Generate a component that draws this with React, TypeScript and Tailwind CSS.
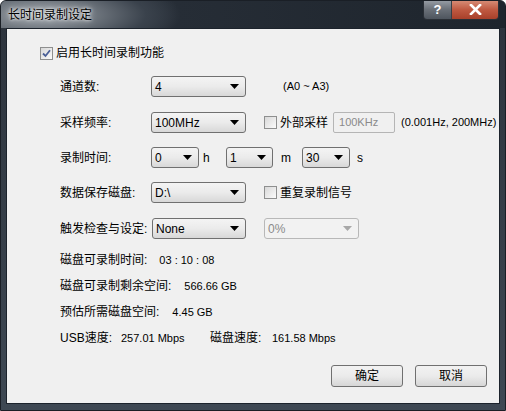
import React from "react";

const font = { fontFamily: '"Liberation Sans", "Noto Sans CJK SC", sans-serif' };

function Arrow({ disabled = false }: { disabled?: boolean }) {
  return (
    <svg width="9" height="5" viewBox="0 0 9 5" className="shrink-0">
      <path d="M0 0 H9 L4.5 5 Z" fill={disabled ? "#a8a8a8" : "#000"} />
    </svg>
  );
}

function Select({ value, width, disabled = false }: { value: string; width: string; disabled?: boolean }) {
  return (
    <div
      className={`${width} flex h-[21px] items-center justify-between rounded-[3px] border pl-[3px] pr-[6px] text-[12px] ${
        disabled
          ? "border-[#b8b8b8] bg-[#f2f2f2] text-[#8a8a8a]"
          : "border-[#707070] bg-gradient-to-b from-[#f4f4f4] via-[#ebebeb] to-[#d8d8d8] text-black"
      }`}
    >
      <span>{value}</span>
      <Arrow disabled={disabled} />
    </div>
  );
}

function Check({ checked = false }: { checked?: boolean }) {
  return (
    <div className="flex h-[13px] w-[13px] shrink-0 items-center justify-center border border-[#8e8f8f] bg-gradient-to-br from-[#d8d8d8] to-[#fbfbfb]">
      {checked && (
        <svg width="9" height="9" viewBox="0 0 9 9">
          <path d="M1 4.5 L3.5 7 L8 1.2" stroke="#4a5f97" strokeWidth="1.8" fill="none" />
        </svg>
      )}
    </div>
  );
}

function Button({ label }: { label: string }) {
  return (
    <div className="flex h-[22px] w-[72px] items-center justify-center rounded-[3px] border border-[#707070] bg-gradient-to-b from-[#f2f2f2] via-[#ebebeb] to-[#d6d6d6] text-[12px] text-black">
      {label}
    </div>
  );
}

export default function App() {
  return (
    <div
      className="relative h-[411px] w-[506px] overflow-hidden rounded-t-[6px] border border-[#1a1f26] bg-gradient-to-b from-[#2c333c] to-[#3e4853]"
      style={font}
    >
      {/* title bar */}
      <div className="flex h-[27px] items-center bg-[radial-gradient(ellipse_140px_40px_at_40px_14px,#a0a6ac_0%,#737a82_35%,#3a424c_75%,transparent_100%),linear-gradient(90deg,#4e565f_0%,#262d36_35%,#1e252d_100%)] pl-[7px]">
        <span className="text-[12px] text-black [text-shadow:0_0_6px_#fff,0_0_3px_#fff]">长时间录制设定</span>
      </div>
      <div className="absolute right-[6px] top-[-1px] flex h-[20px] overflow-hidden rounded-b-[4px] border border-t-0 border-[#2a2f36]">
        <div className="flex w-[28px] items-center justify-center border-r border-[#3a3f46] bg-gradient-to-b from-[#9aa0a8] via-[#6a7078] to-[#4e555e] text-[13px] font-bold text-white">
          ?
        </div>
        <div className="flex w-[46px] items-center justify-center bg-gradient-to-b from-[#d8907a] via-[#c05a42] to-[#a8402a]">
          <svg width="13" height="11" viewBox="0 0 13 11">
            <path d="M2 1 L11 10 M11 1 L2 10" stroke="#fff" strokeWidth="2.6" strokeLinecap="square" />
          </svg>
        </div>
      </div>

      {/* client area */}
      <div className="mx-[5px] h-[376px] border border-[#1c232c] bg-[#f0f0f0] text-[12px] text-black">
        <div className="pl-[33px] pt-[14px]">
          <div className="flex h-[20px] items-center gap-[3px]">
            <Check checked />
            <span>启用长时间录制功能</span>
          </div>
        </div>

        <div className="pl-[53px]">
          <div className="mt-[13px] flex h-[21px] items-center">
            <span className="w-[91px]">通道数:</span>
            <Select value="4" width="w-[95px]" />
            <span className="ml-[37px] text-[11px]">(A0 ~ A3)</span>
          </div>

          <div className="mt-[15px] flex h-[21px] items-center">
            <span className="w-[91px]">采样频率:</span>
            <Select value="100MHz" width="w-[95px]" />
            <div className="ml-[18px] flex items-center gap-[3px]">
              <Check />
              <span>外部采样</span>
            </div>
            <div className="ml-[5px] flex h-[21px] w-[62px] items-center rounded-[2px] border border-[#b5b5b5] bg-[#f0f0f0] pl-[5px] text-[11px] text-[#8a8a8a]">
              100KHz
            </div>
            <span className="ml-[6px] text-[11px]">(0.001Hz, 200MHz)</span>
          </div>

          <div className="mt-[14px] flex h-[21px] items-center">
            <span className="w-[91px]">录制时间:</span>
            <Select value="0" width="w-[48px]" />
            <span className="ml-[4px] w-[23px]">h</span>
            <Select value="1" width="w-[47px]" />
            <span className="ml-[8px] w-[21px]">m</span>
            <Select value="30" width="w-[48px]" />
            <span className="ml-[7px]">s</span>
          </div>

          <div className="mt-[14px] flex h-[21px] items-center">
            <span className="w-[91px]">数据保存磁盘:</span>
            <Select value="D:\" width="w-[95px]" />
            <div className="ml-[18px] flex items-center gap-[3px]">
              <Check />
              <span>重复录制信号</span>
            </div>
          </div>

          <div className="mt-[15px] flex h-[21px] items-center">
            <span className="w-[92px] whitespace-nowrap">触发检查与设定:</span>
            <Select value="None" width="w-[94px]" />
            <div className="ml-[18px]">
              <Select value="0%" width="w-[95px]" disabled />
            </div>
          </div>

          <div className="mt-[11px] flex h-[20px] items-center">
            <span>磁盘可录制时间:</span>
            <span className="ml-[12px] text-[11px]">03 : 10 : 08</span>
          </div>
          <div className="mt-[6px] flex h-[20px] items-center">
            <span>磁盘可录制剩余空间:</span>
            <span className="ml-[13px] text-[11px]">566.66 GB</span>
          </div>
          <div className="mt-[6px] flex h-[20px] items-center">
            <span>预估所需磁盘空间:</span>
            <span className="ml-[13px] text-[11px]">4.45 GB</span>
          </div>
          <div className="mt-[6px] flex h-[20px] items-center">
            <span className="w-[61px]">USB速度:</span>
            <span className="w-[89px] text-[11px]">257.01 Mbps</span>
            <span className="w-[62px]">磁盘速度:</span>
            <span className="text-[11px]">161.58 Mbps</span>
          </div>
        </div>

        <div className="mt-[17px] flex justify-end gap-[12px] pr-[12px]">
          <Button label="确定" />
          <Button label="取消" />
        </div>
      </div>
    </div>
  );
}
